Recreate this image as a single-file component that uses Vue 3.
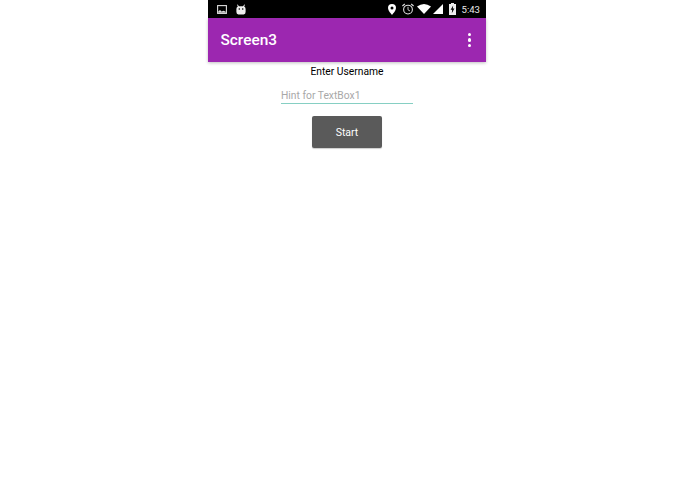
<script setup>
const title = 'Screen3';
</script>

<template>
  <div class="page">
    <div class="phone">
      <!-- Barra de estado -->
      <div class="status">
        <div class="status-left">
          <svg class="ic-pic" width="10" height="9" viewBox="0 0 10 9">
            <rect x="0.6" y="0.6" width="8.8" height="7.8" fill="none" stroke="#ddd" stroke-width="1.1" />
            <path d="M1.2 7.8 L1.2 6.4 L3 5 L4.6 6.4 L6.6 5.8 L8.8 6.8 L8.8 7.8 Z" fill="#ddd" />
          </svg>
          <svg class="ic-bot" width="10" height="11" viewBox="0 0 10 11">
            <path d="M1.6 0.4 L3 2.2 L7 2.2 L8.4 0.4 L9 0.8 L8.2 2.6 Q9.6 3.4 9.6 5 L9.6 8 Q9.6 10.4 7.6 10.4 L2.4 10.4 Q0.4 10.4 0.4 8 L0.4 5 Q0.4 3.4 1.8 2.6 L1 0.8 Z" fill="#eee" />
            <circle cx="3.3" cy="5" r="0.8" fill="#000" />
            <circle cx="6.7" cy="5" r="0.8" fill="#000" />
          </svg>
        </div>
        <div class="status-right">
          <svg class="ic-pin" width="8" height="11" viewBox="0 0 8 11">
            <path fill-rule="evenodd" d="M4 0 A4 4 0 0 1 8 4 C8 6.8 5.2 9.4 4 11 C2.8 9.4 0 6.8 0 4 A4 4 0 0 1 4 0 Z M4 2.5 A1.5 1.5 0 1 0 4 5.5 A1.5 1.5 0 1 0 4 2.5 Z" fill="#fff" />
          </svg>
          <svg class="ic-alarm" width="12" height="12" viewBox="0 0 12 12">
            <circle cx="6" cy="6.6" r="4.4" fill="none" stroke="#ddd" stroke-width="1.1" />
            <path d="M6 3.8 L6 6.8 L8 8" fill="none" stroke="#ddd" stroke-width="0.9" />
            <path d="M0.4 3 L2.8 1 M11.6 3 L9.2 1" stroke="#ddd" stroke-width="1.2" />
          </svg>
          <svg class="ic-wifi" width="14" height="10" viewBox="0 0 14 10">
            <path d="M0 2.6 Q7 -2.4 14 2.6 L7 10 Z" fill="#fff" />
          </svg>
          <svg class="ic-signal" width="10" height="10" viewBox="0 0 10 10">
            <path d="M0 10 L10 0 L10 10 Z" fill="#fff" />
          </svg>
          <svg class="ic-batt" width="7" height="12" viewBox="0 0 7 12">
            <path d="M2 0 L5 0 L5 1 L7 1 L7 12 L0 12 L0 1 L2 1 Z" fill="#eee" />
            <path d="M4.2 2.6 L1.6 6.8 L3.2 6.8 L2.8 10.2 L5.4 5.6 L3.8 5.6 Z" fill="#000" />
          </svg>
          <span class="clock">5:43</span>
        </div>
      </div>

      <!-- Barra de titulo -->
      <div class="appbar">
        <span class="title">{{ title }}</span>
        <div class="menu">
          <i></i><i></i><i></i>
        </div>
      </div>

      <!-- Contenido -->
      <div class="content">
        <p class="label">Enter Username</p>
        <input class="box" type="text" placeholder="Hint for TextBox1" />
        <button class="start">Start</button>
      </div>
    </div>
  </div>
</template>

<style scoped>
.page {
  width: 695px;
  height: 494px;
  display: flex;
  justify-content: center;
  background: #fff;
  overflow: hidden;
}

.phone {
  width: 278px;
  margin-left: -1px;
  display: flex;
  flex-direction: column;
  align-items: stretch;
  font-family: Roboto, "Liberation Sans", sans-serif;
}

.status {
  height: 18px;
  background: #000;
  display: flex;
  justify-content: space-between;
  align-items: center;
  padding: 0 6px 0 9px;
}

.status-left {
  display: flex;
  align-items: center;
  gap: 9px;
}

.status-right {
  display: flex;
  align-items: center;
}

.ic-alarm {
  margin-left: 6px;
}

.ic-wifi {
  margin-left: 3px;
}

.ic-signal {
  margin-left: 2px;
}

.ic-batt {
  margin-left: 6px;
}

.clock {
  color: #e8e8e8;
  font-size: 9.6px;
  margin-left: 6px;
}

.appbar {
  height: 44px;
  background: #9c27b0;
  box-shadow: 0 1px 3px rgba(0, 0, 0, 0.25);
  display: flex;
  justify-content: space-between;
  align-items: center;
  padding: 0 15px 0 12.5px;
}

.title {
  color: #fff;
  font-size: 15.4px;
  font-weight: 500;
}

.menu {
  display: flex;
  flex-direction: column;
  gap: 2px;
}

.menu i {
  width: 3.5px;
  height: 3.5px;
  border-radius: 50%;
  background: #fff;
}

.content {
  display: flex;
  flex-direction: column;
  align-items: center;
}

.label {
  margin: 3px 0 0;
  font-size: 10.3px;
  line-height: 13px;
  color: #000;
}

.box {
  width: 132px;
  height: 16px;
  margin-top: 3px;
  padding: 6px 0 0;
  box-sizing: content-box;
  border: none;
  border-bottom: 1px solid #86cfc3;
  outline: none;
  font-family: inherit;
  font-size: 10.3px;
  color: #000;
  background: transparent;
}

.box::placeholder {
  color: #a8a8a8;
}

.start {
  width: 70px;
  height: 32px;
  margin-top: 12px;
  border: none;
  border-radius: 2px;
  background: #5a5a5a;
  color: #fff;
  font-family: inherit;
  font-size: 10.5px;
  box-shadow: 0 1px 1px rgba(0, 0, 0, 0.2);
}
</style>
